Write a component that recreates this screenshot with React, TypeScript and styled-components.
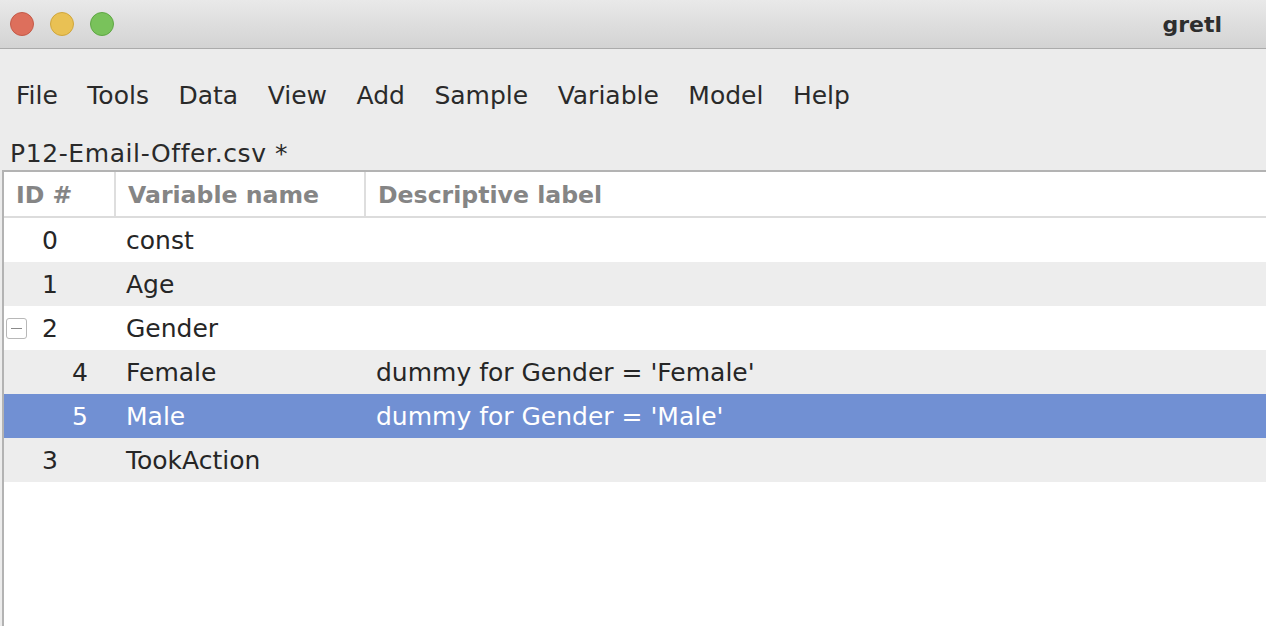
import React from "react";
import styled, { createGlobalStyle } from "styled-components";

const Global = createGlobalStyle`
  html, body { margin: 0; padding: 0; }
  body {
    width: 1266px;
    height: 626px;
    overflow: hidden;
    background: #ececec;
    font-family: "DejaVu Sans", "Liberation Sans", sans-serif;
    color: #262626;
  }
`;

const Window = styled.div`
  width: 1266px;
  height: 626px;
  display: flex;
  flex-direction: column;
  background: #ececec;
  overflow: hidden;
`;

const TitleBar = styled.div`
  height: 48px;
  flex: none;
  display: flex;
  align-items: center;
  padding: 0 0 0 10px;
  background: linear-gradient(#e9e9e9, #d3d3d3);
  border-bottom: 1px solid #ababab;
`;

const Lights = styled.div`
  display: flex;
  gap: 16px;
`;

const Light = styled.span<{ $bg: string; $bd: string }>`
  width: 22px;
  height: 22px;
  border-radius: 50%;
  background: ${(p) => p.$bg};
  border: 1px solid ${(p) => p.$bd};
`;

const Title = styled.div`
  margin-left: auto;
  margin-right: 44px;
  font-weight: bold;
  font-size: 22px;
  color: #2e2e2e;
`;

const MenuBar = styled.div`
  display: flex;
  gap: 29.5px;
  padding: 31px 0 0 16px;
  font-size: 25px;
  line-height: 32px;
  color: #2a2a2a;
`;

const MenuItem = styled.span``;

const FileLabel = styled.div`
  margin: 27px 0 1px 10px;
  font-size: 25px;
  letter-spacing: 0.6px;
  line-height: 30px;
  color: #2a2a2a;
`;

const Table = styled.div`
  flex: 1;
  margin-left: 2px;
  border-top: 2px solid #b3b3b3;
  border-left: 2px solid #b3b3b3;
  background: #ffffff;
`;

const HeaderRow = styled.div`
  display: grid;
  grid-template-columns: 110px 250px 1fr;
  height: 44px;
  border-bottom: 2px solid #dcdcdc;
`;

const HeaderCell = styled.div<{ $sep?: boolean }>`
  padding: 3px 0 0 12px;
  border-left: ${(p) => (p.$sep ? "2px solid #dedede" : "none")};
  font-weight: bold;
  font-size: 23.6px;
  line-height: 41px;
  color: #858585;
  white-space: nowrap;
`;

const Row = styled.div<{ $alt?: boolean; $sel?: boolean }>`
  display: grid;
  grid-template-columns: 110px 250px 1fr;
  height: 44px;
  box-sizing: border-box;
  padding-top: 1px;
  font-size: 25px;
  line-height: 43px;
  background: ${(p) => (p.$sel ? "#7190d3" : p.$alt ? "#ededed" : "#ffffff")};
  color: ${(p) => (p.$sel ? "#ffffff" : "#262626")};
`;

const IdCell = styled.div<{ $child?: boolean }>`
  display: flex;
  align-items: center;
  padding-left: 2px;
  padding-right: ${(p) => (p.$child ? "26px" : "56px")};
`;

const IdNum = styled.span`
  margin-left: auto;
`;

const Toggle = styled.span`
  width: 19px;
  height: 19px;
  border: 1px solid #b8b8b8;
  border-radius: 3px;
  display: flex;
  align-items: center;
  justify-content: center;
  &::after {
    content: "";
    width: 11px;
    height: 1px;
    background: #8a8a8a;
  }
`;

const TextCell = styled.div`
  padding-left: 12px;
  white-space: nowrap;
`;

type R = { id: string; name: string; label?: string; child?: boolean; toggle?: boolean; sel?: boolean };

const rows: R[] = [
  { id: "0", name: "const" },
  { id: "1", name: "Age" },
  { id: "2", name: "Gender", toggle: true },
  { id: "4", name: "Female", label: "dummy for Gender = 'Female'", child: true },
  { id: "5", name: "Male", label: "dummy for Gender = 'Male'", child: true, sel: true },
  { id: "3", name: "TookAction" },
];

const menus = ["File", "Tools", "Data", "View", "Add", "Sample", "Variable", "Model", "Help"];

export default function App() {
  return (
    <Window>
      <Global />
      <TitleBar>
        <Lights>
          <Light $bg="#dd6f5c" $bd="#c45a48" />
          <Light $bg="#e9c154" $bd="#d0a63c" />
          <Light $bg="#79c25b" $bd="#5fa744" />
        </Lights>
        <Title>gretl</Title>
      </TitleBar>
      <MenuBar>
        {menus.map((m) => (
          <MenuItem key={m}>{m}</MenuItem>
        ))}
      </MenuBar>
      <FileLabel>P12-Email-Offer.csv *</FileLabel>
      <Table>
        <HeaderRow>
          <HeaderCell>ID #</HeaderCell>
          <HeaderCell $sep>Variable name</HeaderCell>
          <HeaderCell $sep>Descriptive label</HeaderCell>
        </HeaderRow>
        {rows.map((r, i) => (
          <Row key={r.id} $alt={i % 2 === 1} $sel={r.sel}>
            <IdCell $child={r.child}>
              {r.toggle && <Toggle />}
              <IdNum>{r.id}</IdNum>
            </IdCell>
            <TextCell>{r.name}</TextCell>
            <TextCell>{r.label ?? ""}</TextCell>
          </Row>
        ))}
      </Table>
    </Window>
  );
}
